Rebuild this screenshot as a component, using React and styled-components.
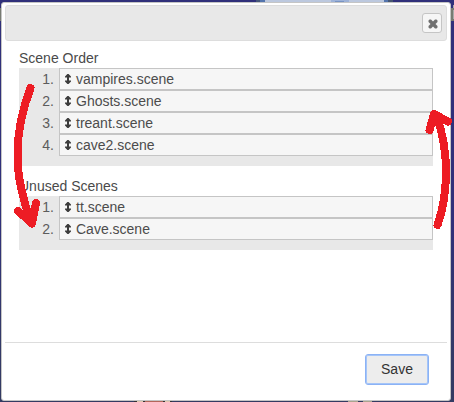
import React from "react";
import styled, { createGlobalStyle } from "styled-components";

const GlobalStyle = createGlobalStyle`
  * { box-sizing: border-box; }
  body { margin: 0; overflow: hidden; }
`;

const Page = styled.div`
  position: relative;
  width: 454px;
  height: 402px;
  padding: 2px 3px 1px 1px;
  background: linear-gradient(#30307a 0, #30307a 55%, #33396a 80%, #333b62 100%);
  font-family: "Liberation Sans", Arial, sans-serif;
  font-size: 14px;
  color: #444;
`;

const Backdrop = styled.svg`
  position: absolute;
  inset: 0;
`;

const Dialog = styled.section`
  position: relative;
  display: flex;
  flex-direction: column;
  width: 450px;
  height: 399px;
  padding: 2px 3px;
  border: 1px solid #c5c5c5;
  border-radius: 3px;
  background: #fff;
`;

const TitleBar = styled.header`
  display: flex;
  align-items: center;
  justify-content: flex-end;
  flex: none;
  height: 36px;
  padding-right: 4px;
  border: 1px solid #ddd;
  border-radius: 3px;
  background: #e8e8e8;
`;

const CloseButton = styled.button`
  display: grid;
  place-items: center;
  width: 20px;
  height: 20px;
  padding: 2px 0 0 2px;
  border: 1px solid #c5c5c5;
  border-radius: 3px;
  background: #f6f6f6;
`;

const Content = styled.main`
  flex: 1;
  padding: 9px 14px 0 14px;
`;

const SceneGroup = styled.section`
  margin-bottom: 12px;
`;

const Heading = styled.h2`
  height: 18px;
  margin: 0;
  font-size: 14px;
  font-weight: 400;
  line-height: 17px;
  color: #4a4a4a;
`;

const SceneList = styled.ol`
  margin: 0;
  padding: 0 0 10px;
  list-style: none;
  background: #e8e8e8;
`;

const SceneRow = styled.li`
  display: grid;
  grid-template-columns: 40px 1fr;
  height: 22px;
  line-height: 22px;
`;

const Number = styled.span`
  padding-right: 5px;
  text-align: right;
  color: #5c5c5c;
`;

const SceneItem = styled.div`
  display: flex;
  align-items: center;
  gap: 5px;
  padding-left: 5px;
  border: 1px solid #c5c5c5;
  background: #f6f6f6;
  line-height: 20px;
  color: #4c4c4c;
`;

const Footer = styled.footer`
  display: flex;
  justify-content: flex-end;
  flex: none;
  height: 56px;
  padding: 11px 18px 0 0;
  border-top: 1px solid #ddd;
`;

const SaveButton = styled.button`
  width: 64px;
  height: 31px;
  padding: 0;
  border: 1px solid #8bb2f5;
  border-radius: 3px;
  box-shadow: inset 0 0 0 1px #a5c5f8;
  background: #ededed;
  font: 14px/27px "Liberation Sans", Arial, sans-serif;
  color: #333;
`;

const Annotations = styled.svg`
  position: absolute;
  inset: 0;
  pointer-events: none;
`;

const MoveIcon = () => (
  <svg width="6" height="10" viewBox="0 0 6 10" fill="#3c3c3c">
    <path d="M2.4 0h1.2L6 2.500v1H4v3h2v1L3.600 10H2.400L0 7.500v-1h2v-3H0v-1z" />
  </svg>
);

const CloseIcon = () => (
  <svg width="10" height="10" viewBox="0 0 10 10" fill="#707070">
    <path d="M1.500.5h1.500L5 2.500 7 .5h1.500l1 1V3l-2 2 2 2v1.500l-1 1H7l-2-2-2 2H1.500l-1-1V7l2-2-2-2V1.500z" />
  </svg>
);

const groups = [
  { title: "Scene Order", scenes: ["vampires.scene", "Ghosts.scene", "treant.scene", "cave2.scene"] },
  { title: "Unused Scenes", scenes: ["tt.scene", "Cave.scene"] },
];

export default function App() {
  return (
    <Page>
      <GlobalStyle />
      <Backdrop width="454" height="402" shapeRendering="crispEdges">
        <path fill="#46577a" d="M256 0h4v2h-4z" />
        <path fill="#5374ad" d="M260 0h5v2h-5zM384 0h4v2h-4z" />
        <path fill="#bcc8de" d="M265 0h119v2H265z" />
        <path fill="#9db2d8" d="M331 0h18v2h-18z" />
        <path fill="#7894c4" d="M335 1h9v1h-9z" />
        <path fill="#465671" d="M388 0h5v2h-5z" />
        <path fill="#777b72" d="M0 8h2v13H0zM451 8h3v13h-3z" />
        <path fill="#aaa" d="M453 10h1v9h-1zM453 5h1v3h-1z" />
        <path fill="#333" d="M134 401h38v1h-38z" />
        <path fill="#dfc4ac" d="M137 401h6v1h-6zM165 401h5v1h-5z" />
        <path fill="#b3675b" d="M145 401h18v1h-18z" />
        <path fill="#aaa58e" d="M348 401h10v1h-10zM363 401h9v1h-9z" />
      </Backdrop>
      <Dialog>
        <TitleBar>
          <CloseButton aria-label="Close"><CloseIcon /></CloseButton>
        </TitleBar>
        <Content>
          {groups.map(({ title, scenes }) => (
            <SceneGroup key={title}>
              <Heading>{title}</Heading>
              <SceneList>
                {scenes.map((scene, i) => (
                  <SceneRow key={scene}>
                    <Number>{i + 1}.</Number>
                    <SceneItem><MoveIcon />{scene}</SceneItem>
                  </SceneRow>
                ))}
              </SceneList>
            </SceneGroup>
          ))}
        </Content>
        <Footer><SaveButton>Save</SaveButton></Footer>
      </Dialog>
      <Annotations width="454" height="402" fill="none" stroke="#ed1c24" strokeWidth="8" strokeLinecap="round" strokeLinejoin="round" shapeRendering="crispEdges">
        <path d="M30.5 88C24 105 17.5 130 17.5 155C17.5 178 23 198 30 220" />
        <path d="M18 211L32 223.500L36 203" />
        <path fill="#ed1c24" stroke="none" d="M20 209L32 224L35 205L29 213z" />
        <path d="M437.500 225C444 207 446 187 446 170C446 152 442 132 437 116M429.500 130L434 114L448 121.500" />
      </Annotations>
    </Page>
  );
}
